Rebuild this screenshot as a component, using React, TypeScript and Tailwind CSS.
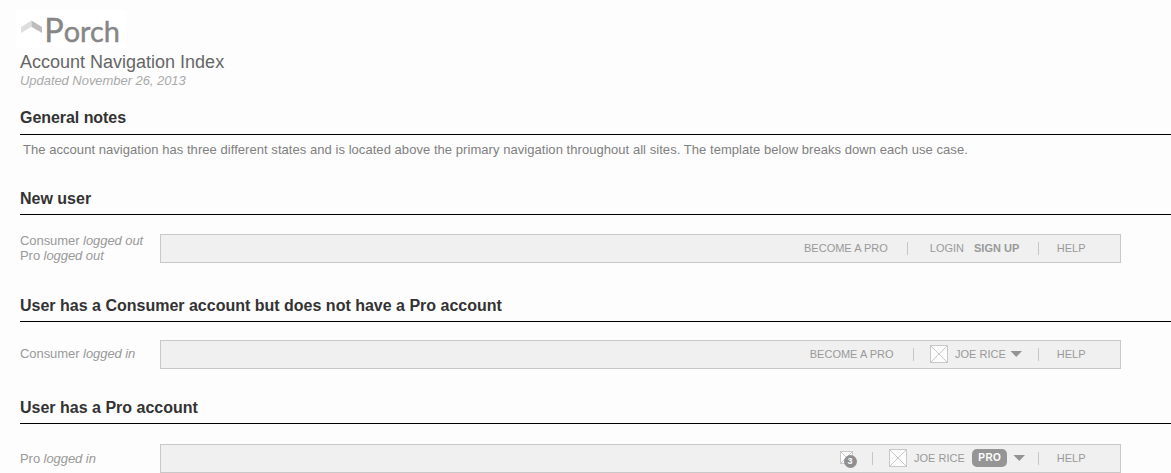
import type { ReactNode } from 'react';

function Logo() {
  return (
    <svg width="111" height="38" viewBox="0 0 111 38" className="block overflow-visible bg-white font-['Lato','Open_Sans',sans-serif]" role="img" aria-label="Porch">
      <path d="M5 17 L15.5 10.5 V16.8 L5 23 Z" fill="#dedede" />
      <path d="M15.5 10.5 L26 17 V23 L15.5 16.8 Z" fill="#bdbdbd" />
      <text transform="translate(28.2 31.5) scale(0.98 1)" fontSize="33" fill="#868686" stroke="#868686" strokeWidth="0.4">
        P<tspan fontSize="29.5">orch</tspan>
      </text>
    </svg>
  );
}

function Placeholder({ size }: { size: number }) {
  return (
    <svg width={size} height={size} viewBox={`0 0 ${size} ${size}`} className="block shrink-0">
      <rect x="0.5" y="0.5" width={size - 1} height={size - 1} fill="#fdfdfd" stroke="#c8c8c8" />
      <path d={`M1 1 L${size - 1} ${size - 1} M${size - 1} 1 L1 ${size - 1}`} stroke="#c8c8c8" />
    </svg>
  );
}

function Caret() {
  return (
    <svg width="12" height="6" viewBox="0 0 12 6" className="block shrink-0">
      <path d="M0.5 0 H12 L6.25 6 Z" fill="#939393" />
    </svg>
  );
}

function Divider() {
  return <span className="h-[13px] w-px shrink-0 bg-[#c6c6c6]" />;
}

function SectionTitle({ children }: { children: ReactNode }) {
  return (
    <h2 className="ml-5 h-[27px] border-b border-black text-base leading-[22px] font-bold text-[#333]">
      {children}
    </h2>
  );
}

interface NavRowProps {
  label: ReactNode;
  children: ReactNode;
}

function NavRow({ label, children }: NavRowProps) {
  return (
    <div className="flex h-[29px] items-center pl-5">
      <div className="w-[140px] shrink-0 pb-px text-[13px] leading-[15px] tracking-[-0.06px] text-[#999]">{label}</div>
      <nav className="flex h-[29px] w-[961px] shrink-0 items-center justify-end border border-[#c8c8c8] bg-[#f0f0f0] pr-[34.5px] text-[11px] leading-[13px] whitespace-nowrap text-[#999]">
        {children}
        <Divider />
        <span className="ml-[18px]">HELP</span>
      </nav>
    </div>
  );
}

export default function App() {
  return (
    <main className="h-[473px] w-full overflow-hidden bg-[#fdfdfd] font-['Liberation_Sans',Arial,sans-serif]">
      <header className="h-[107px] pt-[10px]">
        <div className="pl-4">
          <Logo />
        </div>
        <h1 className="mt-[3px] pl-5 text-lg leading-[22px] text-[#666]">Account Navigation Index</h1>
        <p className="pl-5 text-[13px] leading-[15px] tracking-[-0.05px] text-[#aaa] italic">Updated November 26, 2013</p>
      </header>

      <section className="mt-px h-[80px]">
        <SectionTitle>
          <span className="relative -top-px tracking-[-0.05px]">General notes</span>
        </SectionTitle>
        <p className="pt-[7px] pl-[23px] text-[13px] leading-[15px] tracking-[0.05px] text-[#808080]">
          The account navigation has three different states and is located above the primary navigation throughout all sites. The template below breaks down each use case.
        </p>
      </section>

      <section className="h-[107px]">
        <SectionTitle>New user</SectionTitle>
        <div className="pt-[19px]">
          <NavRow
            label={
              <>
                Consumer <i>logged out</i>
                <br />
                Pro <i>logged out</i>
              </>
            }
          >
            <span className="mr-[19px]">BECOME A PRO</span>
            <Divider />
            <span className="ml-[22px]">LOGIN</span>
            <b className="mr-[18.5px] ml-[10px]">SIGN UP</b>
          </NavRow>
        </div>
      </section>

      <section className="h-[102px]">
        <SectionTitle>User has a Consumer account but does not have a Pro account</SectionTitle>
        <div className="pt-[18px]">
          <NavRow label={<div className="pb-px">Consumer <i>logged in</i></div>}>
            <span className="mr-[19px]">BECOME A PRO</span>
            <Divider />
            <div className="-mt-px mr-4 ml-4 flex items-center">
              <Placeholder size={18} />
              <span className="mr-[4px] ml-[7.5px] pt-px">JOE RICE</span>
              <Caret />
            </div>
          </NavRow>
        </div>
      </section>

      <section>
        <SectionTitle>User has a Pro account</SectionTitle>
        <div className="pt-5">
          <NavRow label={<>Pro <i>logged in</i></>}>
            <div className="relative -mt-0.5 mr-[19px]">
              <Placeholder size={13} />
              <span className="absolute top-1 left-1 flex size-[13px] items-center justify-center rounded-full bg-[#8f8f8f] text-[9px] leading-none font-bold text-white">
                3
              </span>
            </div>
            <Divider />
            <div className="-mt-px mr-[12.5px] ml-4 flex items-center">
              <Placeholder size={18} />
              <span className="ml-[7.5px] pt-px">JOE RICE</span>
              <span className="mr-1.5 ml-[7.5px] flex h-[18px] w-[35px] items-center justify-center rounded-[5px] bg-[#959595] text-[10px] leading-none font-bold tracking-[0.4px] text-white">
                PRO
              </span>
              <Caret />
            </div>
          </NavRow>
        </div>
      </section>
    </main>
  );
}
